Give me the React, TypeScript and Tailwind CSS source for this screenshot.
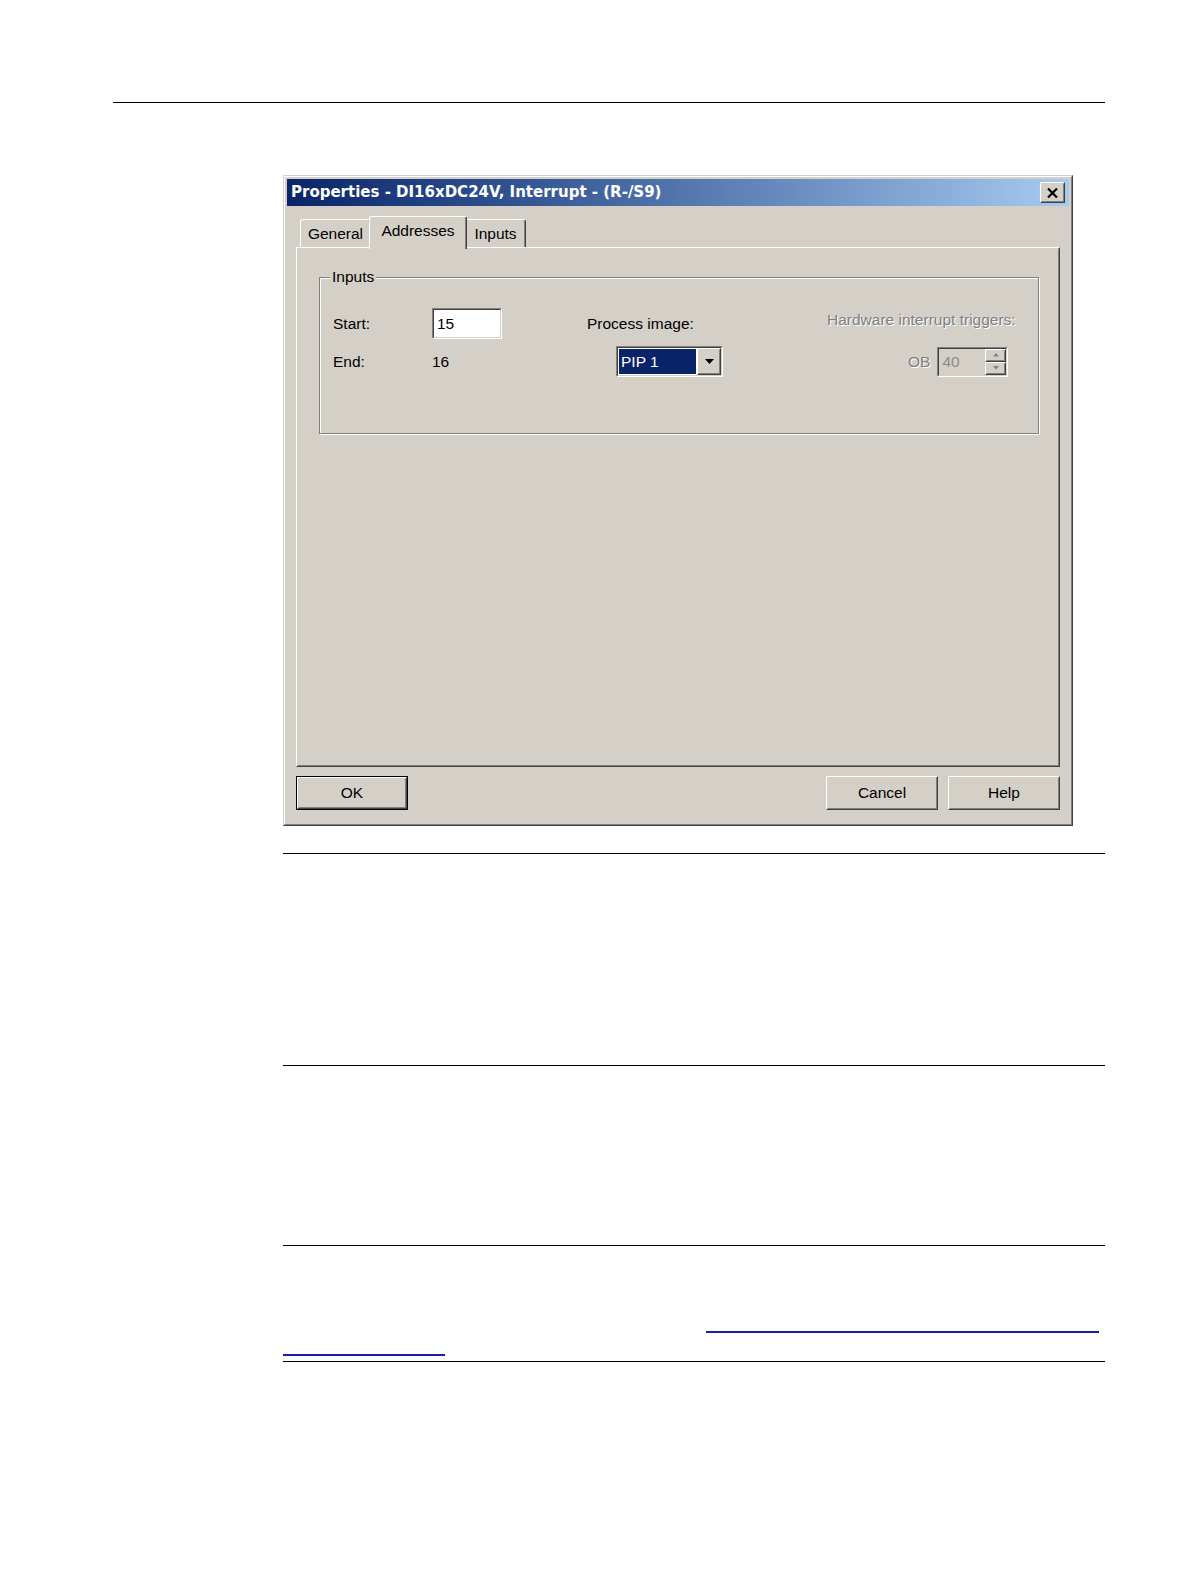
import type { ReactNode } from 'react'

// win2k-style 3d frames
function Raised({ className = '', children }: { className?: string; children?: ReactNode }) {
  return (
    <div className={`border border-t-white border-l-white border-r-[#404040] border-b-[#404040] bg-[#d4d0c8] ${className}`}>
      <div className="h-full w-full border border-t-[#d4d0c8] border-l-[#d4d0c8] border-r-[#808080] border-b-[#808080] flex items-center justify-center">
        {children}
      </div>
    </div>
  )
}

function Sunken({ className = '', children }: { className?: string; children?: ReactNode }) {
  return (
    <div className={`border border-t-[#808080] border-l-[#808080] border-r-white border-b-white ${className}`}>
      <div className="h-full w-full border border-t-[#404040] border-l-[#404040] border-r-[#d4d0c8] border-b-[#d4d0c8] flex items-center">
        {children}
      </div>
    </div>
  )
}

function Tab({ label, width, active }: { label: string; width: string; active?: boolean }) {
  if (active) {
    return (
      <div
        className={`${width} h-[33px] -mb-[2px] -mx-[2px] relative z-10 bg-[#d4d0c8] border-t border-l border-r border-t-white border-l-white border-r-[#404040] shadow-[inset_-1px_0_0_#808080] rounded-t-[3px] flex items-center justify-center pb-[4px]`}
      >
        {label}
      </div>
    )
  }
  return (
    <div
      className={`${width} h-[28px] bg-[#d4d0c8] border-t border-l border-r border-t-white border-l-white border-r-[#404040] shadow-[inset_-1px_0_0_#808080] rounded-t-[3px] flex items-center justify-center`}
    >
      {label}
    </div>
  )
}

const disabledText = 'text-[#808080] [text-shadow:1px_1px_0_#ffffff]'

function Dialog() {
  return (
    <div className="w-[790px] h-[651px] bg-[#d4d0c8] border border-t-[#d4d0c8] border-l-[#d4d0c8] border-r-[#404040] border-b-[#404040] font-['Liberation_Sans',Arial,sans-serif] text-[15.5px] text-black">
      <div className="h-full border border-t-white border-l-white border-r-[#808080] border-b-[#808080] p-[2px] flex flex-col">
        {/* title bar */}
        <div className="h-[27px] bg-linear-to-r from-[#0a246a] to-[#a6caf0] flex items-center pl-[4px] pr-[4px]">
          <span className="font-['DejaVu_Sans',Verdana,sans-serif] font-bold text-[15px] text-white whitespace-nowrap">
            Properties - DI16xDC24V, Interrupt - (R-/S9)
          </span>
          <Raised className="ml-auto w-[25px] h-[21px]">
            <svg width="11" height="10" viewBox="0 0 11 10">
              <path d="M1 0.5 L10 9.5 M10 0.5 L1 9.5" stroke="#000" strokeWidth="2.2" />
            </svg>
          </Raised>
        </div>

        <div className="px-[9px] flex flex-col">
          {/* tabs */}
          <div className="mt-[10px] h-[31px] flex items-end pl-[4px]">
            <Tab label="General" width="w-[71px]" />
            <Tab label="Addresses" width="w-[98px]" active />
            <Tab label="Inputs" width="w-[61px]" />
          </div>

          {/* tab page */}
          <div className="h-[520px] border border-t-white border-l-white border-r-[#404040] border-b-[#404040]">
            <div className="h-full border border-transparent border-r-[#808080] border-b-[#808080] pt-[28px]">
              <div className="relative ml-[21px] mr-[19px] h-[157px] border border-[#808080] shadow-[inset_1px_1px_0_#fff,1px_1px_0_#fff]">
                <span className="absolute left-[10px] -top-[10px] px-[2px] bg-[#d4d0c8] leading-[18px]">Inputs</span>
                <div className="pt-[30px] pl-[13px] flex flex-col gap-[7px]">
                  <div className="h-[31px] flex items-center">
                    <div className="w-[99px]">Start:</div>
                    <div className="w-[155px]">
                      <Sunken className="w-[70px] h-[31px] bg-white">
                        <span className="pl-[3px]">15</span>
                      </Sunken>
                    </div>
                    <div className="w-[240px]">Process image:</div>
                    <div className={`mb-[7px] ${disabledText}`}>Hardware interrupt triggers:</div>
                  </div>
                  <div className="h-[31px] flex items-center">
                    <div className="w-[99px]">End:</div>
                    <div className="w-[155px]">16</div>
                    <div className="w-[240px]">
                      <Sunken className="ml-[29px] w-[107px] h-[31px] bg-white">
                        <div className="h-full flex-1 p-[1px] flex">
                          <div className="flex-1 bg-[#0a246a] text-white pl-[2px] flex items-center">PIP 1</div>
                        </div>
                        <Raised className="w-[24px] h-full">
                          <svg width="9" height="5" viewBox="0 0 9 5">
                            <path d="M0 0 H9 L4.5 5 Z" fill="#000" />
                          </svg>
                        </Raised>
                      </Sunken>
                    </div>
                    <div className={`ml-[81px] ${disabledText}`}>OB</div>
                    <Sunken className="ml-[7px] w-[71px] h-[30px]">
                      <span className="flex-1 pl-[3px] text-[#8c8c8c]">40</span>
                      <div className="w-[21px] h-full flex flex-col">
                        <Raised className="flex-1">
                          <svg width="6" height="4" viewBox="0 0 6 4">
                            <path d="M3 0 L6 3.5 H0 Z" fill="#808080" />
                          </svg>
                        </Raised>
                        <Raised className="flex-1">
                          <svg width="6" height="4" viewBox="0 0 6 4">
                            <path d="M0 0 H6 L3 3.5 Z" fill="#808080" />
                          </svg>
                        </Raised>
                      </div>
                    </Sunken>
                  </div>
                </div>
              </div>
            </div>
          </div>

          {/* buttons */}
          <div className="mt-[9px] flex items-center gap-[10px]">
            <div className="border border-black">
              <Raised className="w-[110px] h-[32px]">OK</Raised>
            </div>
            <Raised className="ml-auto w-[112px] h-[34px]">Cancel</Raised>
            <Raised className="w-[112px] h-[34px]">Help</Raised>
          </div>
        </div>
      </div>
    </div>
  )
}

export default function App() {
  return (
    <div className="w-[1191px] min-h-[1587px] bg-white pt-[102px] overflow-hidden">
      <div className="ml-[113px] w-[992px] h-px bg-black" />
      <div className="ml-[283px] mt-[72px]">
        <Dialog />
      </div>
      <div className="ml-[283px] w-[822px]">
        <div className="mt-[27px] h-px bg-black" />
        <div className="mt-[211px] h-px bg-black" />
        <div className="mt-[179px] h-px bg-black" />
        <div className="mt-[85px] ml-[423px] w-[393px] h-[2px] bg-[#1c1ca8]" />
        <div className="mt-[21px] w-[162px] h-[2px] bg-[#1c1ca8]" />
        <div className="mt-[5px] h-px bg-black" />
      </div>
    </div>
  )
}
